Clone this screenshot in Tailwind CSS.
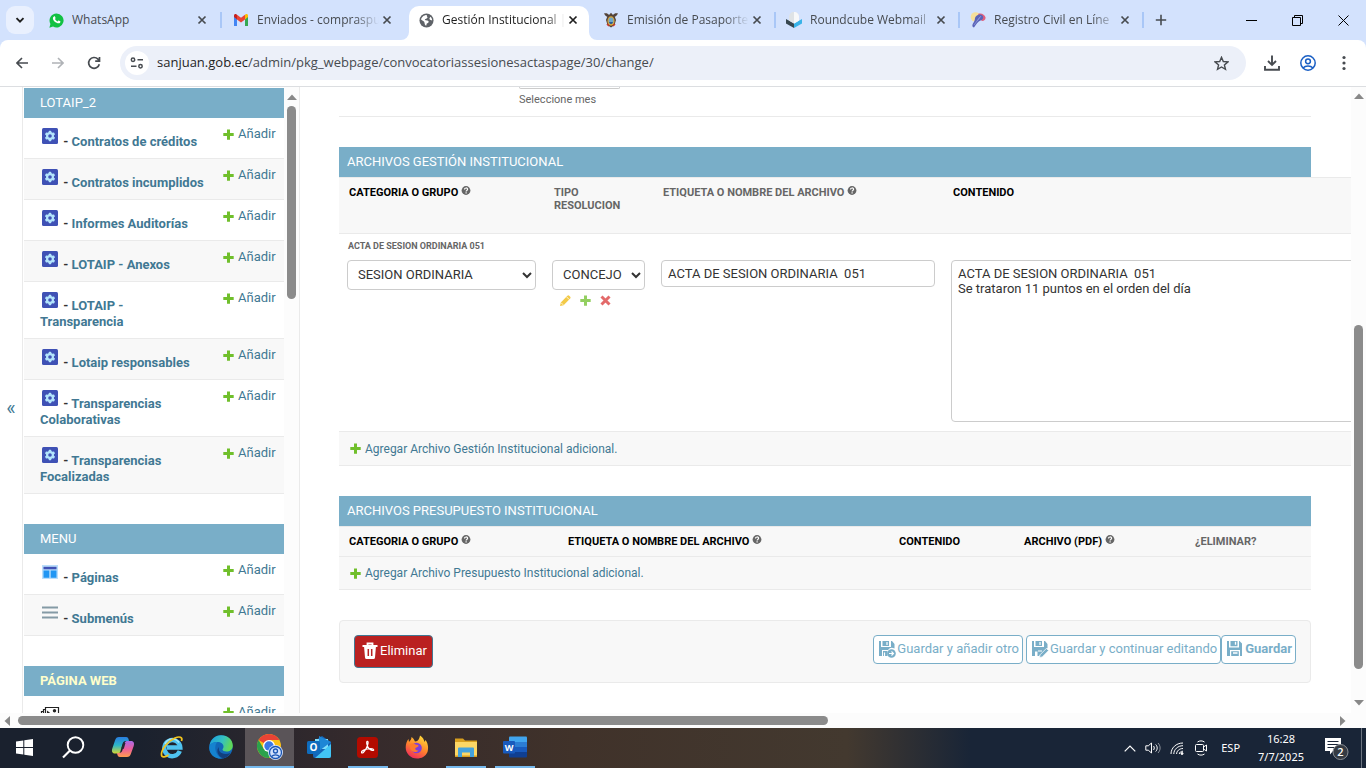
<!DOCTYPE html>
<html lang="es">
<head>
    <meta charset="UTF-8">
    <meta name="viewport" content="width=device-width, initial-scale=1.0">
    <title>Gestión Institucional</title>

    <!-- Tailwind CSS -->
    <script src="https://cdn.jsdelivr.net/npm/@tailwindcss/browser@4"></script>
</head>
<body class="flex h-screen flex-col overflow-hidden bg-white font-['Roboto',sans-serif] text-[13px] text-[#333]">

    <!-- Shared icons -->
    <svg class="hidden" aria-hidden="true">
        <symbol id="close" viewBox="0 0 10 10"><path d="M1.5 1.5l7 7M8.5 1.5l-7 7" fill="none" stroke="currentColor" stroke-width="1.7"/></symbol>
        <symbol id="plus" viewBox="0 0 13 13"><path d="M5 1.5h3V5h3.7v3H8v3.7H5V8H1.3V5H5z" fill="#70bf2b"/></symbol>
        <symbol id="help" viewBox="0 0 10 10"><circle cx="5" cy="4.5" r="4.400" fill="#666"/><path d="M3.500 3.500c0-2 3.100-2 3.100-.2 0 1.100-1.500 1.100-1.500 2.100M5.100 6.300v1.200" fill="none" stroke="#fff" stroke-width="1.200"/></symbol>
        <symbol id="gear" viewBox="0 0 20 20">
            <rect x="2" y="2" width="16" height="16" rx="1.5" fill="#3f51b5"/>
            <g fill="#b3e5fc">
                <rect x="8.7" y="4.8" width="2.6" height="10.4" rx=".6"/>
                <rect x="8.7" y="4.8" width="2.6" height="10.4" rx=".6" transform="rotate(60 10 10)"/>
                <rect x="8.7" y="4.8" width="2.6" height="10.4" rx=".6" transform="rotate(120 10 10)"/>
                <circle cx="10" cy="10" r="4"/>
            </g>
            <circle cx="10" cy="10" r="1.8" fill="#3f51b5"/>
        </symbol>
        <symbol id="up" viewBox="0 0 10 6"><path d="M0 6l5-5.5L10 6z" fill="#888"/></symbol>
    </svg>

    <!-- Tab strip -->
    <header class="flex h-10 shrink-0 items-center bg-[#d3e2fd] font-['Open_Sans',sans-serif] text-[12px] text-[#474b50]">
        <button aria-label="Buscar pestañas" class="ml-[6px] mr-[7px] flex size-7 shrink-0 items-center justify-center rounded-[9px] bg-[#e9f0fe]">
            <svg class="size-[10px]" viewBox="0 0 10 10"><path d="M1.5 3.2L5 6.7l3.5-3.5" fill="none" stroke="#1f1f1f" stroke-width="1.9"/></svg>
        </button>

        <div class="relative flex h-full w-[184px] items-center pl-2 pr-[18px]">
            <svg class="mr-2 size-[15px] shrink-0" viewBox="0 0 16 16"><path d="M8 .5a7.5 7.5 0 1 1-3.7 14L.4 15.6l1.1-3.9A7.5 7.5 0 0 1 8 .5z" fill="#12c143"/><path d="M5.300 3.700c.5-.3 1-.2 1.200.3l.5 1.200c.1.300-.4.800-.6 1.100.6 1.300 1.600 2.200 2.900 2.700.3-.2.700-1 1.100-.9l1.600.8c.4.200.1 1.300-.4 1.700-1 .8-2.400.4-3.500-.2C6.400 9.700 5 8.200 4.400 6.800c-.5-1.300-.2-2.400.9-3.100z" fill="#fff"/></svg>
            <span class="flex-1 overflow-hidden whitespace-nowrap">WhatsApp</span>
            <button aria-label="Cerrar"><svg class="size-[10px]"><use href="#close"/></svg></button>
            <span class="absolute right-[3px] top-3 h-4 w-[2px] bg-[#a9c7f7]"></span>
        </div>
        <div class="flex h-full w-[184px] items-center pl-2 pr-[17px]">
            <svg class="mr-2 size-4 shrink-0" viewBox="0 0 16 16"><path d="M1 4v10h3V7z" fill="#4285f4"/><path d="M15 4v10h-3V7z" fill="#34a853"/><path d="M1 3.500c0-1.500 1.500-2 2.600-1.100L4 2.700v4.700L1 5z" fill="#c5221f"/><path d="M15 3.500c0-1.500-1.500-2-2.600-1.100l-.4.300v4.700L15 5z" fill="#fbbc04"/><path d="M4 2.700l4 3.100 4-3.100v4.700l-4 3-4-3z" fill="#ea4335"/></svg>
            <span class="mr-[3px] flex-1 overflow-hidden whitespace-nowrap mask-r-from-80%">Enviados - compraspu</span>
            <button aria-label="Cerrar"><svg class="size-[10px]"><use href="#close"/></svg></button>
        </div>
        <div class="relative mt-auto flex h-[34px] w-[180px] items-center rounded-t-[10px] bg-white pb-[6px] pl-[10px] pr-[11px] text-[#1f1f1f]">
            <svg class="absolute -left-2 bottom-0 size-2" viewBox="0 0 8 8"><path d="M8 0v8H0a8 8 0 0 0 8-8z" fill="#fff"/></svg>
            <svg class="absolute -right-2 bottom-0 size-2" viewBox="0 0 8 8"><path d="M0 0v8h8a8 8 0 0 1-8-8z" fill="#fff"/></svg>
            <svg class="mr-2 size-[15px] shrink-0" viewBox="0 0 16 16"><circle cx="8" cy="8" r="7.500" fill="#5f6368"/><path d="M8.500 2c-1 1.500 1 1.500.5 3C8.500 6.200 7 5.800 6.300 7c-.6 1.200 2.800.7 3.700 1.600.8 1-.1 2.400-1.500 2.500-.7.200-.2 1.700-1 2.400-.9-.3-1.700-2.500-1.700-3.500C5.500 9 3.500 8 2.200 7 2.500 4.500 5 2 8.500 2zM12 4c1.500 1.200 2 2.500 2 4-1-.2-2.200-.3-2.800-1.500-.4-1 .6-1.500.8-2.500z" fill="#fff"/></svg>
            <span class="mr-[3px] flex-1 overflow-hidden whitespace-nowrap mask-r-from-85%">Gestión Institucional |</span>
            <button aria-label="Cerrar"><svg class="size-[10px]"><use href="#close"/></svg></button>
        </div>
        <div class="relative flex h-full w-[188px] items-center pl-[14px] pr-[15px]">
            <svg class="mr-2 size-[16px] shrink-0" viewBox="0 0 16 16"><path d="M1 1.500c2.500-.5 4 .2 5 1.500L8 .8 10 3c1-1.300 2.500-2 5-1.500-.8 1.500-1.800 2.700-3.200 3.200L13 8l-1.500 5-3.500 2.500L4.500 13 3 8l1.200-3.300C2.800 4.200 1.800 3 1 1.500z" fill="#54443a"/><ellipse cx="8" cy="9" rx="3.600" ry="4.700" fill="#d9a63a"/><ellipse cx="8" cy="8.700" rx="2.400" ry="3.300" fill="#6ea6c9"/><path d="M6 10h4c-.4 1.500-1.200 2-2 2s-1.600-.5-2-2z" fill="#2f5d8f"/><path d="M4 12l2 2M12 12l-2 2" stroke="#c8332b" stroke-width="1.500"/></svg>
            <span class="mr-[3px] flex-1 overflow-hidden whitespace-nowrap mask-r-from-80%">Emisión de Pasaporte</span>
            <button aria-label="Cerrar"><svg class="size-[10px]"><use href="#close"/></svg></button>
            <span class="absolute right-[1px] top-3 h-4 w-[2px] bg-[#a9c7f7]"></span>
        </div>
        <div class="relative flex h-full w-[184px] items-center pl-[9px] pr-[15px]">
            <svg class="mr-2 size-4 shrink-0" viewBox="0 0 16 16"><path d="M0 7l8 4.500V16L0 11.500z" fill="#37474f"/><path d="M16 7l-8 4.500V16l8-4.500z" fill="#39b3e8"/><path d="M3 5c0-3 2-5 5-5s5 2 5 5v3.500L8 11.500 3 8.500z" fill="#dfe3e6"/><path d="M8 0c3 0 5 2 5 5v3.500l-5 3z" fill="#f7f8f9"/></svg>
            <span class="mr-[3px] flex-1 overflow-hidden whitespace-nowrap mask-r-from-85%">Roundcube Webmail</span>
            <button aria-label="Cerrar"><svg class="size-[10px]"><use href="#close"/></svg></button>
            <span class="absolute right-[1px] top-3 h-4 w-[2px] bg-[#a9c7f7]"></span>
        </div>
        <div class="relative flex h-full w-[184px] items-center pl-[9px] pr-[15px]">
            <svg class="mr-2 size-4 shrink-0" viewBox="0 0 16 16"><circle cx="5.500" cy="5" r="4.800" fill="#f6df9a"/><path d="M8 2c3-1.500 7 .5 7.500 3.500.3 2.500-2 3.700-4 3.300z" fill="#e0607e"/><path d="M5 6c1-3 5-4.500 7.500-2.500C14 5 13 8 10.500 8.500 8 9.500 6.500 12 4 15.500 2 15 2 13 3 11.500 4 10 5 8 5 6z" fill="#5a63b8"/><path d="M4 13l6-8M7 9l4-5" stroke="#8e97d8" stroke-width=".8"/></svg>
            <span class="mr-[3px] flex-1 overflow-hidden whitespace-nowrap mask-r-from-80%">Registro Civil en Líne</span>
            <button aria-label="Cerrar"><svg class="size-[10px]"><use href="#close"/></svg></button>
            <span class="absolute right-[1px] top-3 h-4 w-[2px] bg-[#a9c7f7]"></span>
        </div>
        <button aria-label="Nueva pestaña" class="ml-[10px]"><svg class="size-3" viewBox="0 0 12 12"><path d="M6 .8v10.400M.8 6h10.400" stroke="#474b50" stroke-width="1.600"/></svg></button>

        <div class="ml-auto flex items-center text-black">
            <button aria-label="Minimizar" class="flex h-10 w-[46px] items-center justify-center"><svg class="size-[11px]" viewBox="0 0 11 11"><path d="M0 5.500h11" stroke="currentColor"/></svg></button>
            <button aria-label="Restaurar" class="flex h-10 w-[46px] items-center justify-center"><svg class="size-[11px]" viewBox="0 0 11 11"><path d="M.5 2.500h8v8h-8zM2.500 2.500v-2h8v8h-2" fill="none" stroke="currentColor"/></svg></button>
            <button aria-label="Cerrar ventana" class="flex h-10 w-[46px] items-center justify-center"><svg class="size-[11px]" viewBox="0 0 11 11"><path d="M.5.500l10 10M10.500.500l-10 10" stroke="currentColor"/></svg></button>
        </div>
    </header>

    <!-- Toolbar -->
    <div class="shrink-0 bg-[#d3e2fd]">
        <nav class="flex h-[47px] items-center rounded-t-lg border-b border-[#dcdee1] bg-white text-[#474b50]">
            <button aria-label="Atrás" class="ml-4"><svg class="size-3" viewBox="0 0 12 12"><path d="M12 6H1.200M6 1L1 6l5 5" fill="none" stroke="currentColor" stroke-width="1.600"/></svg></button>
            <button aria-label="Adelante" class="ml-6 text-[#b0b3b7]"><svg class="size-3" viewBox="0 0 12 12"><path d="M0 6h10.800M6 1l5 5-5 5" fill="none" stroke="currentColor" stroke-width="1.600"/></svg></button>
            <button aria-label="Recargar" class="ml-[23px] mr-[19px]"><svg class="size-[14px]" viewBox="0 0 14 14"><path d="M12.300 8.200A5.400 5.400 0 1 1 11 3.200l1.300 1.300M12.500.900v4.300H8.200" fill="none" stroke="currentColor" stroke-width="1.700"/></svg></button>
            <div class="flex h-[34px] flex-1 items-center rounded-full bg-[#ecf0f9] pl-[5px] pr-[17px]">
                <button aria-label="Información del sitio" class="flex size-6 items-center justify-center rounded-full bg-white">
                    <svg class="size-[14px]" viewBox="0 0 14 14"><path d="M7.500 3.700H13M1 10.300h5.500" stroke="currentColor" stroke-width="1.600"/><g fill="none" stroke="currentColor" stroke-width="1.500"><circle cx="3" cy="3.700" r="1.700"/><circle cx="10.500" cy="10.300" r="1.700"/></g></svg>
                </button>
                <a href="#" class="ml-2 flex-1 font-['Open_Sans',sans-serif] text-[13px] text-[#474b50]"><span class="text-[#1f1f1f]">sanjuan.gob.ec</span>/admin/pkg_webpage/convocatoriassesionesactaspage/30/change/</a>
                <button aria-label="Añadir a marcadores"><svg class="size-[15px]" viewBox="0 0 15 15"><path d="M7.500 1.300l1.800 4.200 4.600.4-3.500 3 1.100 4.500-4-2.400-4 2.400 1.100-4.500-3.500-3 4.600-.4z" fill="none" stroke="currentColor" stroke-width="1.400"/></svg></button>
            </div>
            <button aria-label="Descargas" class="ml-[18px]"><svg class="size-4" viewBox="0 0 16 16"><path d="M8 .5v9.200M4 6l4 4 4-4M1 11v3.800h14V11" fill="none" stroke="currentColor" stroke-width="1.900"/></svg></button>
            <button aria-label="Perfil" class="ml-5"><svg class="size-4" viewBox="0 0 16 16"><g fill="none" stroke="#1a5fc4" stroke-width="1.500"><circle cx="8" cy="8" r="7.200"/><circle cx="8" cy="6.300" r="2.400"/><path d="M3 13c2.500-2.700 7.500-2.700 10 0"/></g></svg></button>
            <button aria-label="Menú" class="ml-5 mr-[14px]"><svg class="size-4" viewBox="0 0 16 16" fill="currentColor"><circle cx="8" cy="2.500" r="1.600"/><circle cx="8" cy="8" r="1.600"/><circle cx="8" cy="13.500" r="1.600"/></svg></button>
        </nav>
    </div>

    <!-- Page -->
    <div class="flex min-h-0 flex-1">
        <button aria-label="Ocultar navegación" class="flex w-[23px] shrink-0 items-center justify-center border-r border-[#eaeaea] pt-4 text-[20px] text-[#417893]">«</button>

        <!-- Sidebar -->
        <nav class="w-[261px] shrink-0 overflow-hidden pl-px pt-px">
            <table class="mb-[30px] w-full">
                <caption class="h-[30px] bg-[#79aec8] px-4 text-left text-[13px] leading-[30px] text-white">LOTAIP_2</caption>
                <tbody class="leading-4 [&_td]:py-2 [&_td]:pl-[7px] [&_td]:align-top [&_td]:whitespace-nowrap [&_td]:text-[#417893] [&_th]:w-[191px] [&_th]:py-2 [&_th]:pl-4 [&_th]:pr-2 [&_th]:text-left [&_th]:text-[#417893] [&_tr]:border-b [&_tr]:border-[#eaeaea] [&_tr:nth-child(even)]:bg-[#f8f8f8]">
                    <tr>
                        <th><svg class="inline size-5 align-baseline"><use href="#gear"/></svg> <span class="text-[#333]">-</span> <a href="#">Contratos de créditos</a></th>
                        <td><a href="#" class="flex items-center gap-[3px]"><svg class="size-[13px]"><use href="#plus"/></svg>Añadir</a></td>
                    </tr>
                    <tr>
                        <th><svg class="inline size-5 align-baseline"><use href="#gear"/></svg> <span class="text-[#333]">-</span> <a href="#">Contratos incumplidos</a></th>
                        <td><a href="#" class="flex items-center gap-[3px]"><svg class="size-[13px]"><use href="#plus"/></svg>Añadir</a></td>
                    </tr>
                    <tr>
                        <th><svg class="inline size-5 align-baseline"><use href="#gear"/></svg> <span class="text-[#333]">-</span> <a href="#">Informes Auditorías</a></th>
                        <td><a href="#" class="flex items-center gap-[3px]"><svg class="size-[13px]"><use href="#plus"/></svg>Añadir</a></td>
                    </tr>
                    <tr>
                        <th><svg class="inline size-5 align-baseline"><use href="#gear"/></svg> <span class="text-[#333]">-</span> <a href="#">LOTAIP - Anexos</a></th>
                        <td><a href="#" class="flex items-center gap-[3px]"><svg class="size-[13px]"><use href="#plus"/></svg>Añadir</a></td>
                    </tr>
                    <tr>
                        <th><svg class="inline size-5 align-baseline"><use href="#gear"/></svg> <span class="text-[#333]">-</span> <a href="#">LOTAIP - Transparencia</a></th>
                        <td><a href="#" class="flex items-center gap-[3px]"><svg class="size-[13px]"><use href="#plus"/></svg>Añadir</a></td>
                    </tr>
                    <tr>
                        <th><svg class="inline size-5 align-baseline"><use href="#gear"/></svg> <span class="text-[#333]">-</span> <a href="#">Lotaip responsables</a></th>
                        <td><a href="#" class="flex items-center gap-[3px]"><svg class="size-[13px]"><use href="#plus"/></svg>Añadir</a></td>
                    </tr>
                    <tr>
                        <th><svg class="inline size-5 align-baseline"><use href="#gear"/></svg> <span class="text-[#333]">-</span> <a href="#">Transparencias Colaborativas</a></th>
                        <td><a href="#" class="flex items-center gap-[3px]"><svg class="size-[13px]"><use href="#plus"/></svg>Añadir</a></td>
                    </tr>
                    <tr>
                        <th><svg class="inline size-5 align-baseline"><use href="#gear"/></svg> <span class="text-[#333]">-</span> <a href="#">Transparencias Focalizadas</a></th>
                        <td><a href="#" class="flex items-center gap-[3px]"><svg class="size-[13px]"><use href="#plus"/></svg>Añadir</a></td>
                    </tr>
                </tbody>
            </table>

            <table class="mb-[30px] w-full">
                <caption class="h-[30px] bg-[#79aec8] px-4 text-left text-[13px] leading-[30px] text-white">MENU</caption>
                <tbody class="leading-4 [&_td]:py-2 [&_td]:pl-[7px] [&_td]:align-top [&_td]:whitespace-nowrap [&_td]:text-[#417893] [&_th]:w-[191px] [&_th]:py-2 [&_th]:pl-4 [&_th]:pr-2 [&_th]:text-left [&_th]:text-[#417893] [&_tr]:border-b [&_tr]:border-[#eaeaea] [&_tr:nth-child(even)]:bg-[#f8f8f8]">
                    <tr>
                        <th><svg class="inline size-5 align-baseline" viewBox="0 0 20 20"><path d="M2 3h16v14H2z" fill="#bbdefb"/><path d="M3.500 4.800h13v2.500h-13z" fill="#3f51b5"/><path d="M3.500 8.500h5.800v7.300H3.500zM10.700 8.500h5.800v7.300h-5.800z" fill="#2196f3"/></svg> <span class="text-[#333]">-</span> <a href="#">Páginas</a></th>
                        <td><a href="#" class="flex items-center gap-[3px]"><svg class="size-[13px]"><use href="#plus"/></svg>Añadir</a></td>
                    </tr>
                    <tr>
                        <th><svg class="inline size-5 align-baseline" viewBox="0 0 20 20"><path d="M2 4.500h16M2 9.500h16M2 14.500h16" stroke="#849aa5" stroke-width="1.900"/></svg> <span class="text-[#333]">-</span> <a href="#">Submenús</a></th>
                        <td><a href="#" class="flex items-center gap-[3px]"><svg class="size-[13px]"><use href="#plus"/></svg>Añadir</a></td>
                    </tr>
                </tbody>
            </table>

            <table class="w-full">
                <caption class="h-[30px] bg-[#79aec8] px-4 text-left text-[13px] leading-[30px] font-bold text-[#ffffcc]">PÁGINA WEB</caption>
                <tbody class="leading-4 [&_td]:py-2 [&_td]:pl-[7px] [&_td]:align-top [&_td]:whitespace-nowrap [&_td]:text-[#417893] [&_th]:w-[191px] [&_th]:py-2 [&_th]:pl-4 [&_th]:pr-2 [&_th]:text-left [&_th]:text-[#417893]">
                    <tr>
                        <th><svg class="inline size-5 align-baseline" viewBox="0 0 20 20"><path d="M5.500 3.500h13v10h-13zM5.500 5.500h-2v10h12M3.500 7.500h-2v10h12" fill="none" stroke="#222" stroke-width="1.200"/><path d="M7 12V6.500L11.500 10l2 2z" fill="#222"/><circle cx="14.500" cy="6.800" r="1.700" fill="#222"/></svg></th>
                        <td><a href="#" class="flex items-center gap-[3px]"><svg class="size-[13px]"><use href="#plus"/></svg>Añadir</a></td>
                    </tr>
                </tbody>
            </table>
        </nav>
        <div class="flex w-4 shrink-0 flex-col items-center border-r border-[#eaeaea] bg-[#fcfcfc] pt-[7px]">
            <svg class="h-[6px] w-[10px]"><use href="#up"/></svg>
            <div class="mt-[6px] h-[193px] w-[9px] rounded-full bg-[#8b8b8b]"></div>
        </div>

        <!-- Change form -->
        <main class="min-w-0 flex-1 overflow-hidden pl-[39px]">
            <form>
                <div class="mr-10 mb-[30px] h-[30px] border-b border-[#eaeaea] pl-[180px]">
                    <div class="h-[2px] w-[101px] rounded-b-[4px] border-x border-b border-[#ccc]"></div>
                    <p class="pt-[3px] text-[11px] leading-[15px] text-[#666]">Seleccione mes</p>
                </div>

                <fieldset class="mb-[30px] min-w-0">
                    <h2 class="mr-10 h-[30px] bg-[#79aec8] px-2 text-[13px] leading-[30px] text-white">ARCHIVOS GESTIÓN INSTITUCIONAL</h2>
                    <table class="w-[1400px] table-fixed">
                        <colgroup><col class="w-[205px]"><col class="w-[109px]"><col class="w-[290px]"><col></colgroup>
                        <thead class="h-[56px] border-y border-[#eaeaea] bg-[#f8f8f8] text-left align-top text-[11px] leading-[13px] text-[#666] [&_th]:px-[10px] [&_th]:pt-2">
                            <tr>
                                <th id="cat" class="text-black">CATEGORIA O GRUPO <svg class="inline size-[10px] align-baseline"><use href="#help"/></svg></th>
                                <th id="tipo">TIPO RESOLUCION</th>
                                <th id="etq">ETIQUETA O NOMBRE DEL ARCHIVO <svg class="inline size-[10px] align-baseline"><use href="#help"/></svg></th>
                                <th id="cont" class="text-black">CONTENIDO</th>
                            </tr>
                        </thead>
                        <tbody class="align-top">
                            <tr><td colspan="4" class="h-[26px] px-[9px] pt-1 text-[9px] leading-4 font-bold text-[#666]">ACTA DE SESION ORDINARIA 051</td></tr>
                            <tr class="h-[172px] [&_td]:px-2">
                                <td><select aria-labelledby="cat" class="h-[30px] w-full rounded-[4px] border border-[#ccc] bg-white px-[6px] text-[13px]"><option>SESION ORDINARIA</option></select></td>
                                <td>
                                    <select aria-labelledby="tipo" class="h-[30px] w-full rounded-[4px] border border-[#ccc] bg-white px-[6px] text-[13px]"><option>CONCEJO</option></select>
                                    <div class="flex gap-[7px] pl-[7px] pt-1">
                                        <a href="#" aria-label="Modificar"><svg class="size-[13px]" viewBox="0 0 13 13"><path d="M1 12l.8-3.600L8.400 1.800q.9-.9 1.800 0l1 1q.9.900 0 1.800L4.600 11.200z" fill="#efb80b" opacity=".75"/><path d="M2.200 8.800l2 2M7.500 2.800l2.700 2.700" stroke="#fff" stroke-width=".8"/></svg></a>
                                        <a href="#" aria-label="Añadir otro" class="opacity-75"><svg class="size-[13px]"><use href="#plus"/></svg></a>
                                        <a href="#" aria-label="Eliminar"><svg class="size-[13px]" viewBox="0 0 13 13"><path d="M2.500 2.500l8 8M10.500 2.500l-8 8" stroke="#dd4646" stroke-width="3" opacity=".8"/></svg></a>
                                    </div>
                                </td>
                                <td><input type="text" aria-labelledby="etq" value="ACTA DE SESION ORDINARIA  051" class="h-[27px] w-full rounded-[4px] border border-[#ccc] px-[6px] text-[13px]"></td>
                                <td><textarea aria-labelledby="cont" class="block h-[162px] w-[610px] resize-none rounded-[4px] border border-[#ccc] px-[6px] py-[5px] text-[13px] leading-[15px]">ACTA DE SESION ORDINARIA  051
Se trataron 11 puntos en el orden del día</textarea></td>
                            </tr>
                            <tr class="h-[34px] border-y border-[#eaeaea] bg-[#f8f8f8] align-middle">
                                <td colspan="4" class="px-[10px]"><a href="#" class="flex items-center gap-[3px] text-[12px] text-[#417893]"><svg class="size-[13px]"><use href="#plus"/></svg>Agregar Archivo Gestión Institucional adicional.</a></td>
                            </tr>
                        </tbody>
                    </table>
                </fieldset>

                <fieldset class="mr-10 mb-[30px] min-w-0">
                    <h2 class="h-[30px] bg-[#79aec8] px-2 text-[13px] leading-[30px] text-white">ARCHIVOS PRESUPUESTO INSTITUCIONAL</h2>
                    <table class="w-full table-fixed">
                        <colgroup><col class="w-[219px]"><col class="w-[331px]"><col class="w-[125px]"><col class="w-[171px]"><col></colgroup>
                        <thead class="h-[30px] border-y border-[#eaeaea] bg-[#f8f8f8] text-left text-[11px] leading-[13px] text-black [&_th]:px-[10px]">
                            <tr>
                                <th>CATEGORIA O GRUPO <svg class="inline size-[10px] align-baseline"><use href="#help"/></svg></th>
                                <th>ETIQUETA O NOMBRE DEL ARCHIVO <svg class="inline size-[10px] align-baseline"><use href="#help"/></svg></th>
                                <th>CONTENIDO</th>
                                <th>ARCHIVO (PDF) <svg class="inline size-[10px] align-baseline"><use href="#help"/></svg></th>
                                <th class="text-[#666]">¿ELIMINAR?</th>
                            </tr>
                        </thead>
                        <tbody>
                            <tr class="h-[33px] border-b border-[#eaeaea] bg-[#f8f8f8]">
                                <td colspan="5" class="px-[10px]"><a href="#" class="flex items-center gap-[3px] text-[12px] text-[#417893]"><svg class="size-[13px]"><use href="#plus"/></svg>Agregar Archivo Presupuesto Institucional adicional.</a></td>
                            </tr>
                        </tbody>
                    </table>
                </fieldset>

                <!-- Submit row -->
                <div class="mr-10 flex h-[63px] items-start rounded-[4px] border border-[#eaeaea] bg-[#f8f8f8] p-[14px]">
                    <button type="button" class="mr-auto flex h-[33px] items-center rounded-[4px] border border-[#417893] bg-[#ba2121] px-[5px] pb-[2px] text-white">
                        <svg class="size-5" viewBox="0 0 20 20"><path d="M7.500 4V2.500h5V4M2.500 5h15" fill="none" stroke="#fff" stroke-width="1.800"/><path d="M4 5h12l-1 11.500q-.1 1.500-1.500 1.500h-7q-1.400 0-1.500-1.500z" fill="#fff"/><path d="M8.300 8v7M11.700 8v7" stroke="#ba2121" stroke-width="1.500"/></svg>Eliminar
                    </button>
                    <button type="button" class="mr-[3px] flex h-[29px] items-center rounded-[4px] border border-[#79aec8] bg-white px-[3px] pb-[2px] text-[#79aec8]">
                        <svg class="size-5" viewBox="0 0 20 20"><path d="M2 2h2v6h10V2h1l2.500 3v4.500A5 5 0 0 0 11 11H5v6H2z" fill="#79aec8"/><path d="M5.500 2H12v5H5.500zM6 12h4.500v5H6z" fill="#79aec8"/><path d="M10 3v3M7.500 13.500v3.500" stroke="#fff" stroke-width="1.200"/><circle cx="14.500" cy="14.500" r="4.300" fill="#79aec8"/><path d="M12 14.500h4.500M14.500 12.500l2 2-2 2" fill="none" stroke="#fff" stroke-width="1.100"/></svg>Guardar y añadir otro
                    </button>
                    <button type="button" class="flex h-[29px] items-center rounded-[4px] border border-[#79aec8] bg-white px-[3px] pb-[2px] text-[#79aec8]">
                        <svg class="size-5" viewBox="0 0 20 20"><path d="M2 2h2v6h10V2h1l2.500 3v4L9 17H7.500v-4.500H5V17H2z" fill="#79aec8"/><path d="M5.500 2H12v5H5.500z" fill="#79aec8"/><path d="M10 3v3M8 12h4" stroke="#fff" stroke-width="1.200"/><path d="M9.500 18.500l.6-2.800 6.300-6.300 2.200 2.200-6.300 6.300z" fill="#79aec8" stroke="#fff" stroke-width=".7"/></svg>Guardar y continuar editando
                    </button>
                    <button type="submit" class="flex h-[29px] items-center rounded-[4px] border border-[#79aec8] bg-white px-[3px] pb-[2px] font-bold text-[#79aec8]">
                        <svg class="size-5" viewBox="0 0 20 20"><path d="M2 2h2v6.500h10V2h.5L17 4.500V17h-2v-6H5v6H2z" fill="#79aec8"/><path d="M5.500 2h7v5.200h-7zM6.200 12.200h7.600V17H6.200z" fill="#79aec8"/><path d="M10.500 2.800v3M8 14h4.500" stroke="#fff" stroke-width="1.300"/></svg>Guardar
                    </button>
                </div>
            </form>
        </main>

        <div class="flex w-[15px] shrink-0 flex-col items-center bg-[#fcfcfc] pt-[6px] pb-[7px]">
            <svg class="h-[6px] w-[10px]"><use href="#up"/></svg>
            <div class="mt-[226px] h-[344px] w-[9px] rounded-full bg-[#8b8b8b]"></div>
            <svg class="mt-auto h-[6px] w-[10px] rotate-180"><use href="#up"/></svg>
        </div>
    </div>

    <!-- Horizontal scrollbar -->
    <div class="flex h-[15px] shrink-0 items-center bg-[#fcfcfc] pl-1 pr-5">
        <svg class="h-[10px] w-[6px]" viewBox="0 0 6 10"><path d="M6 0v10L.5 5z" fill="#888"/></svg>
        <div class="ml-2 h-[9px] w-[810px] rounded-full bg-[#8b8b8b]"></div>
        <svg class="ml-auto h-[10px] w-[6px]" viewBox="0 0 6 10"><path d="M0 0v10l5.500-5z" fill="#888"/></svg>
    </div>

    <!-- Taskbar -->
    <footer class="flex h-10 shrink-0 items-stretch bg-[linear-gradient(90deg,#1a212e_10%,#352a2c_26%,#40322a_42%,#43392f_62%,#192537_71%)] text-white [&>button]:flex [&>button]:w-[49px] [&>button]:items-center [&>button]:justify-center [&>button]:border-b-2">
        <button aria-label="Inicio" class="border-transparent"><svg class="size-[17px]" viewBox="0 0 17 17"><path d="M0 2.500L7.300 1.400V8H0zM8.300 1.300L17 0v8H8.300zM0 9h7.300v6.600L0 14.500zM8.300 9H17v8l-8.700-1.300z" fill="#fff"/></svg></button>
        <button aria-label="Buscar" class="border-transparent"><svg class="size-6" viewBox="0 0 24 24"><circle cx="13.500" cy="10" r="7.800" fill="none" stroke="#fff" stroke-width="1.900"/><path d="M8 15.500l-7 7" stroke="#fff" stroke-width="2.200"/></svg></button>
        <button aria-label="Copilot" class="border-transparent">
            <svg class="size-6" viewBox="0 0 24 24">
                <defs><linearGradient id="cop1" x2="0" y2="1"><stop stop-color="#2a7de1"/><stop offset=".5" stop-color="#2cb6c8"/><stop offset="1" stop-color="#d4d732"/></linearGradient><linearGradient id="cop2" x2="0" y2="1"><stop stop-color="#a86be8"/><stop offset=".5" stop-color="#ee5d9b"/><stop offset="1" stop-color="#ff9d4d"/></linearGradient></defs>
                <path d="M8 2h7c2 0 2.500 1.500 3 4h-3c-2 0-3 1-3.500 3L9.500 16c-.5 2-1.500 2.500-3 2.500H4c-3 0-3.500-2.500-2.700-5L4 5.500C4.700 3 6 2 8 2z" fill="url(#cop1)"/>
                <path d="M16 22H9c-2 0-2.500-1.500-3-4h1.500c2.500 0 3.500-1 4-3l2-6.500C14 6.500 15 6 17 6h3c3 0 3.500 2.500 2.700 5L20 18.500c-.7 2.500-2 3.500-4 3.500z" fill="url(#cop2)"/>
                <path d="M10.500 13l1.700-5h2.300l-1.800 6z" fill="#262832"/>
            </svg>
        </button>
        <button aria-label="Internet Explorer" class="border-transparent"><svg class="size-6" viewBox="0 0 24 24"><path d="M19.800 16A8 8 0 1 1 20.300 12.500H7" fill="none" stroke="#4fc3f0" stroke-width="4.400"/><path d="M19 7.500A8 8 0 0 0 5 9" fill="none" stroke="#a4e6fb" stroke-width="1.500"/><path d="M21.500 6c1.500-4-2-5-6.500-3C8 6 1 14.500 1.500 20c.3 3 4 2 7 0" fill="none" stroke="#f4c51d" stroke-width="1.700"/></svg></button>
        <button aria-label="Edge" class="border-transparent">
            <svg class="size-6" viewBox="0 0 24 24">
                <defs><linearGradient id="edg" x2="1" y2=".3"><stop stop-color="#1a9de0"/><stop offset=".6" stop-color="#35c1c0"/><stop offset="1" stop-color="#5fd85a"/></linearGradient></defs>
                <circle cx="12" cy="12" r="11.700" fill="#1268b8"/>
                <path d="M.5 11C1.500 4.500 6 .3 12 .3c7 0 11.800 4.800 11.800 10.200 0 4-3 6-6.300 6-2.500 0-4-1-4-2 0-.8 1-1 1-3C14.500 9 12 7 8.500 7 4.500 7 1.500 8.500.5 11z" fill="url(#edg)"/>
                <path d="M8.500 7C5 9.500 5 20 13 23.500 4 24-1 17 .5 11 1.500 8.500 4.500 7 8.500 7z" fill="#1583cf"/>
                <path d="M10 12c-1.500 4.500 3.500 9 11.500 6-2 3-4 4.500-7 5.300C8 21.500 7 14.500 10 12z" fill="#123f7d"/>
            </svg>
        </button>
        <button aria-label="Chrome" class="border-[#76b9ed] bg-[#5a5458]">
            <svg class="size-7" viewBox="0 0 28 28"><circle cx="13" cy="13" r="12" fill="#fbc116"/><path d="M13 13L2.600 7A12 12 0 0 1 23.400 7H13z" fill="#ea4335"/><path d="M2.600 7A12 12 0 0 0 13 25l5.200-9L13 13 7.800 16z" fill="#2ba24c"/><circle cx="13" cy="13" r="6" fill="#fff"/><circle cx="13" cy="13" r="4.700" fill="#3b78e7"/><circle cx="19.500" cy="19.500" r="7.500" fill="#d3e2fd"/><g fill="none" stroke="#1b57b5" stroke-width="1.300"><circle cx="19.500" cy="19.500" r="6"/><circle cx="19.500" cy="18" r="2"/><path d="M15.500 23.500c2-2.300 6-2.300 8 0"/></g></svg>
        </button>
        <button aria-label="Outlook" class="border-transparent">
            <svg class="size-6" viewBox="0 0 24 24"><path d="M6 7l9-6 9 6v14a2 2 0 0 1-2 2H8a2 2 0 0 1-2-2z" fill="#1565b8"/><path d="M8 4h13v10H8z" fill="#7fdcfb"/><path d="M12 1l12 6-12 9z" fill="#1d86d6"/><path d="M24 9v12a2 2 0 0 1-2 2H8z" fill="#42c5f5"/><rect y="6" width="13" height="13" rx="1.500" fill="#0f6cbd"/><text x="6.500" y="16.200" text-anchor="middle" font-family="Open Sans, sans-serif" font-size="10" font-weight="700" fill="#fff">O</text></svg>
        </button>
        <button aria-label="Acrobat" class="border-transparent bg-[linear-gradient(#76b9ed,#76b9ed)] bg-size-[40px_2px] bg-bottom bg-no-repeat bg-origin-border">
            <svg class="size-[21px]" viewBox="0 0 21 21"><rect width="21" height="21" rx="3.500" fill="#b30b00"/><path d="M4.500 15.500c-.5-1.500 3-3 6-3.500s6-.2 6.200.8c.3 1.400-3 .6-4.700-1.300S9.300 5.800 9.800 4.700c.5-.9 1.500-.3 1.300 1.300-.3 3-3 8-4.800 9.500-.8.700-1.600.6-1.800 0z" fill="none" stroke="#fff" stroke-width="1.200"/></svg>
        </button>
        <button aria-label="Firefox" class="border-transparent">
            <svg class="size-6" viewBox="0 0 24 24">
                <defs><linearGradient id="ffx" x1=".8" x2=".3" y2="1"><stop stop-color="#ffe13c"/><stop offset=".5" stop-color="#ff8a2a"/><stop offset="1" stop-color="#f0295b"/></linearGradient></defs>
                <path d="M15 .5c3 2 4 4 4.500 6.500L20.500 5c3 4 3 8.500 2 12-2 4.500-6 6.500-10.500 6.500C5.500 23.500.7 18.500.7 12.500.7 8.500 2 6 3.500 4l.5 3C5.500 5.500 6.500 4 6.500 2c2 1 2.500 3 3.500 4.500C13.500 6.500 14.500 3 15 .5z" fill="url(#ffx)"/>
                <circle cx="11.500" cy="13" r="5.300" fill="#8040d6"/><path d="M5 9.500c2-1.500 4-1 6 .3 1.500 0 2.500.2 2.500 1.200s-2 1-3 2 .5 3 3 2.500c-2 2.500-7 2-8.300-2z" fill="#ff7a2b"/>
            </svg>
        </button>
        <button aria-label="Explorador de archivos" class="border-transparent bg-[linear-gradient(#76b9ed,#76b9ed)] bg-size-[40px_2px] bg-bottom bg-no-repeat bg-origin-border">
            <svg class="size-[22px]" viewBox="0 0 22 22"><path d="M0 2.500h8l2 2h12V21H0z" fill="#d9a01f"/><path d="M0 6h22v13.500H0z" fill="#fcd766"/><path d="M3 12.500a1 1 0 0 1 1-1h14a1 1 0 0 1 1 1V21h-4v-4.500H7V21H3z" fill="#45a3dd"/></svg>
        </button>
        <button aria-label="Word" class="border-transparent bg-[linear-gradient(#76b9ed,#76b9ed)] bg-size-[40px_2px] bg-bottom bg-no-repeat bg-origin-border">
            <svg class="size-6" viewBox="0 0 24 24"><path d="M7 1.500h16a1 1 0 0 1 1 1v4.700H6V2.500a1 1 0 0 1 1-1z" fill="#41a5ee"/><path d="M6 7h18v5.300H6z" fill="#2b7cd3"/><path d="M6 12h18v5.300H6z" fill="#185abd"/><path d="M6 17h18v4.500a1 1 0 0 1-1 1H7a1 1 0 0 1-1-1z" fill="#103f91"/><rect y="6" width="12" height="12.500" rx="1" fill="#185abd"/><text x="6" y="15.800" text-anchor="middle" font-family="Open Sans, sans-serif" font-size="9" font-weight="700" fill="#fff">W</text></svg>
        </button>

        <div class="ml-auto flex items-center font-['Noto_Sans',sans-serif] text-[11px] leading-[18px]">
            <svg class="mr-[9px] h-[7px] w-3" viewBox="0 0 12 7"><path d="M.7 6.300L6 1l5.300 5.300" fill="none" stroke="#fff" stroke-width="1.200"/></svg>
            <svg class="mr-[9px] size-4" viewBox="0 0 16 16" fill="none" stroke="#fff"><path d="M.8 5.800h2.500L6.500 3v10L3.300 10.200H.8z"/><path d="M8.500 6c1 1.200 1 2.800 0 4M10.700 4.500c2 2 2 5 0 7"/><path d="M13 3c2.800 3 2.800 7 0 10" opacity=".5"/></svg>
            <svg class="mr-[9px] size-[14px]" viewBox="0 0 14 14" fill="none" stroke="#fff"><path d="M1 13C1 7 6 2 13 2M3.800 13c0-4.500 4-8.300 9.200-8.300M6.600 13c0-3 2.700-5.500 6.400-5.500M9.300 13c0-1.500 1.500-2.800 3.700-2.800"/><circle cx="12" cy="12.500" r="1" fill="#fff"/></svg>
            <svg class="mr-[12px] size-4" viewBox="0 0 16 16" fill="none" stroke="#fff"><rect x="2.500" y="4.500" width="8" height="7" rx="1"/><path d="M10.500 7l3-2v6l-3-2M4.500 2c2-1.500 5-1.500 7 0M4.500 14c2 1.500 5 1.500 7 0"/></svg>
            <span class="mr-[18px]">ESP</span>
            <div class="mr-5 text-center">16:28<br>7/7/2025</div>
            <svg class="h-6 w-[25px]" viewBox="0 0 25 24"><path d="M1 2h16v13H9l-3 3.500V15H1z" fill="#fff"/><path d="M3.500 5.500h11M3.500 8.500h11M3.500 11.500h7" stroke="#192537" stroke-width="1.200"/><circle cx="16.500" cy="16" r="7.500" fill="#353b43" stroke="#8a8f96"/><text x="16.500" y="20" text-anchor="middle" font-family="Open Sans, sans-serif" font-size="11" font-weight="600" fill="#fff">2</text></svg>
            <span class="ml-3 mr-1 h-10 w-px bg-[#6c7480]"></span>
        </div>
    </footer>
</body>
</html>
